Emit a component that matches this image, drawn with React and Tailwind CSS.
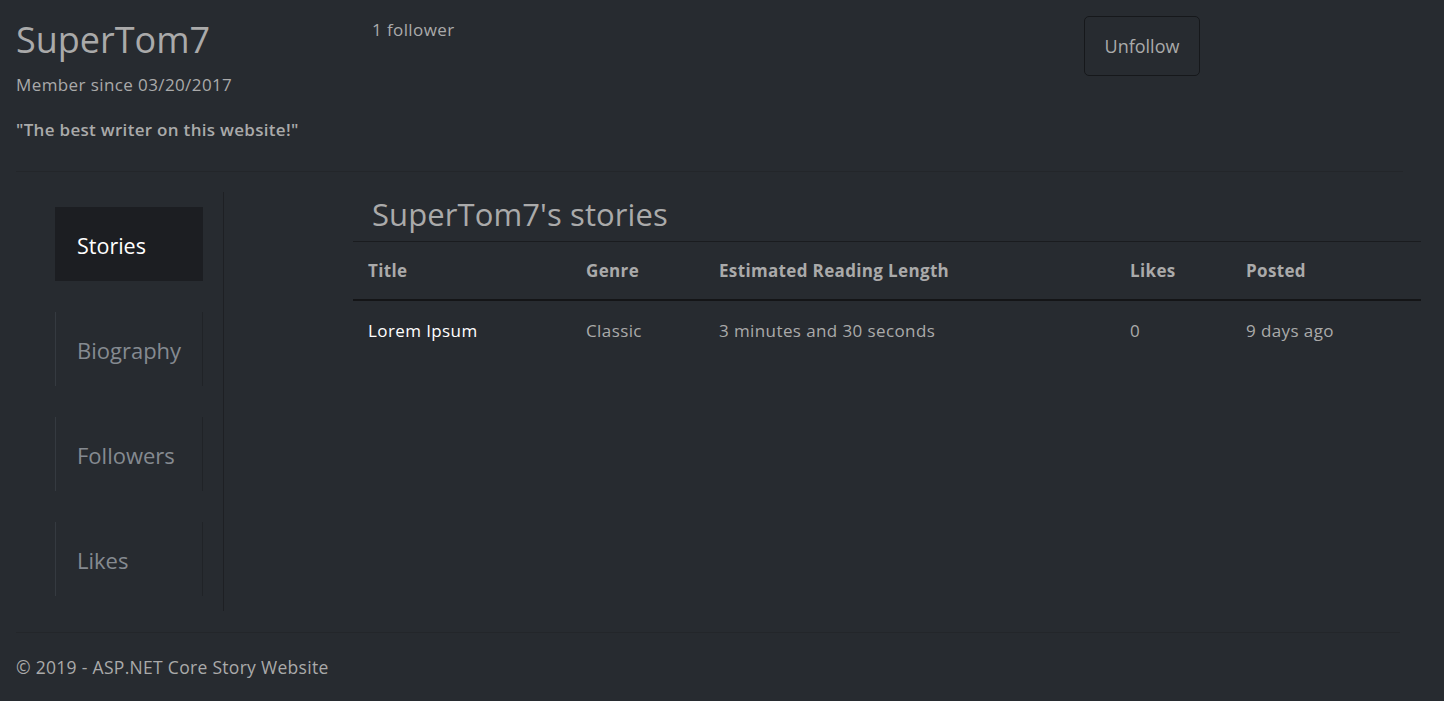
export default function App() {
  const cols = [
    { key: "title", label: "Title", w: "w-[218px]" },
    { key: "genre", label: "Genre", w: "w-[133px]" },
    { key: "len", label: "Estimated Reading Length", w: "w-[411px]" },
    { key: "likes", label: "Likes", w: "w-[116px]" },
    { key: "posted", label: "Posted", w: "" },
  ];
  const navs = ["Stories", "Biography", "Followers", "Likes"];
  return (
    <div className="min-h-[701px] bg-[#272b30] text-[#aaaaaa] font-['Open_Sans',sans-serif]">
      {/* Header */}
      <div className="flex pl-4 pt-[14px]">
        <div className="w-[356px] shrink-0">
          <h1 className="text-[36px] leading-[52px] font-normal text-[#aaaaaa]">SuperTom7</h1>
          <p className="mt-[7px] text-[17px] tracking-[0.4px] leading-6">Member since 03/20/2017</p>
          <p className="mt-[21px] text-[17px] tracking-[0.3px] leading-6 font-semibold">"The best writer on this website!"</p>
        </div>
        <div className="w-[712px] shrink-0 pt-[4px] text-[17px] tracking-[0.4px] leading-6">1 follower</div>
        <div className="pt-[2px]">
          <button className="h-[60px] w-[116px] rounded-[5px] border border-[#16181b] bg-transparent text-[18px] text-[#aaaaaa]">
            Unfollow
          </button>
        </div>
      </div>
      <div className="ml-4 mr-[41px] mt-[29px] border-t border-[#23262a]" />

      {/* Middle */}
      <div className="flex pt-[20px]">
        <div className="w-[224px] shrink-0 border-r border-[#1e2024] pl-[55px] pr-[21px] pt-[15px] pb-[15px] flex flex-col gap-[31px]">
          {navs.map((n, i) =>
            i === 0 ? (
              <div key={n} className="h-[74px] w-[148px] bg-[#1c1e22] flex items-center pl-[22px] pt-[4px] text-[21.5px] text-white">
                {n}
              </div>
            ) : (
              <div
                key={n}
                className="h-[74px] w-[148px] border-l border-r border-l-[#353a40] border-r-[#202327] flex items-center pl-[21px] pt-[2px] text-[22px] text-[#858a90]"
              >
                {n}
              </div>
            )
          )}
        </div>
        <div className="ml-[129px] w-[1068px]">
          <h2 className="pl-[19px] text-[31px] tracking-[0.1px] leading-[44px] text-[#aaaaaa] font-normal">SuperTom7's stories</h2>
          <div className="mt-[5px] border-t border-[#1a1c1f]">
            <div className="flex h-[59px] items-center border-b-2 border-[#141517] font-bold text-[17px] tracking-[0.35px]">
              {cols.map((c) => (
                <div key={c.key} className={`${c.w} shrink-0 pl-[15px]`}>
                  {c.label}
                </div>
              ))}
            </div>
            <div className="flex h-[59px] items-center text-[17px] tracking-[0.4px]">
              <div className="w-[218px] shrink-0 pl-[15px] text-white">Lorem Ipsum</div>
              <div className="w-[133px] shrink-0 pl-[15px]">Classic</div>
              <div className="w-[411px] shrink-0 pl-[15px]">3 minutes and 30 seconds</div>
              <div className="w-[116px] shrink-0 pl-[15px]">0</div>
              <div className="pl-[15px]">9 days ago</div>
            </div>
          </div>
        </div>
      </div>

      {/* Footer */}
      <div className="ml-4 mr-[44px] mt-[21px] border-t border-[#23262a]" />
      <div className="pl-4 pt-[22px] text-[17.5px] tracking-[0.3px] leading-6">© 2019 - ASP.NET Core Story Website</div>
    </div>
  );
}
